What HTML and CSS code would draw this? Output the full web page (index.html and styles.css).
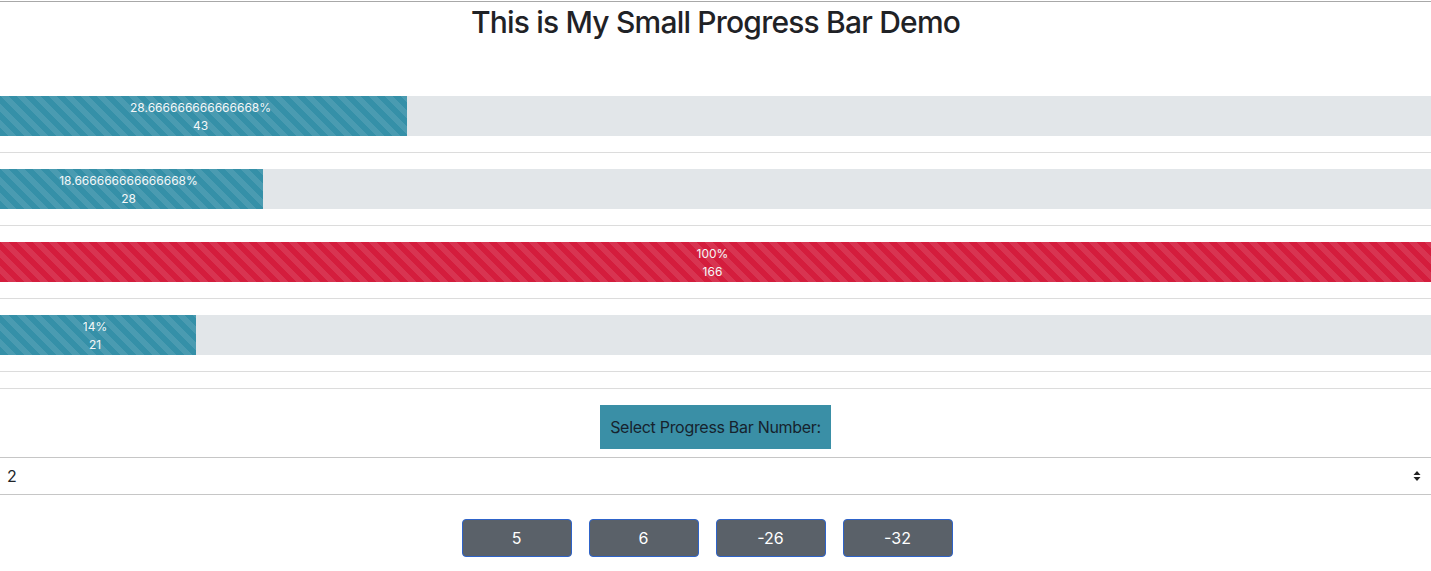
FILE: index.html
```html
<!DOCTYPE html>
<html lang="en">
<head>
<meta charset="utf-8">
<title>Progress Bar Demo</title>
<link rel="stylesheet" href="styles.css">
</head>
<body>
<div class="page">
  <h2 class="title">This is My Small Progress Bar Demo</h2>
  <div class="bars">
    <div class="progress"><div class="bar bar-info" style="width:28.45%"><span>28.666666666666668%</span><span>43</span></div></div>
    <hr class="sep">
    <div class="progress"><div class="bar bar-info" style="width:18.38%"><span>18.666666666666668%</span><span>28</span></div></div>
    <hr class="sep">
    <div class="progress"><div class="bar bar-danger" style="width:100%"><span>100%</span><span>166</span></div></div>
    <hr class="sep">
    <div class="progress"><div class="bar bar-info" style="width:13.7%"><span>14%</span><span>21</span></div></div>
    <hr class="sep">
    <hr class="sep">
  </div>
  <div class="label-row"><label class="select-label" for="sel">Select Progress Bar Number:</label></div>
  <select id="sel" class="select">
    <option>1</option>
    <option selected>2</option>
    <option>3</option>
    <option>4</option>
  </select>
  <div class="buttons">
    <button class="btn">5</button>
    <button class="btn">6</button>
    <button class="btn">-26</button>
    <button class="btn">-32</button>
  </div>
</div>
</body>
</html>
```

FILE: styles.css
```css
html, body {
  margin: 0;
  padding: 0;
  background: #ffffff;
}
body {
  font-family: Inter, "Noto Sans", "Liberation Sans", sans-serif;
  color: #212529;
}
.page {
  margin-top: 1px;
  border-top: 1px solid #a8a8a8;
}
.title {
  margin: 0;
  font-size: 30px;
  line-height: 40px;
  font-weight: 500;
  letter-spacing: -0.8px;
  text-align: center;
  color: #1f2226;
}
.bars {
  margin-top: 54px;
}
.progress {
  height: 40px;
  background: #e2e6e9;
  display: flex;
}
.bar {
  height: 100%;
  box-sizing: border-box;
  padding-top: 2px;
  padding-right: 6px;
  display: flex;
  flex-direction: column;
  justify-content: center;
  align-items: center;
  color: #f4f7f8;
  font-size: 12px;
  line-height: 18px;
  background-size: 16px 16px;
  white-space: nowrap;
}
.bar-info {
  background-color: #3590a8;
  background-image: linear-gradient(45deg, rgba(255,255,255,.1) 25%, transparent 25%, transparent 50%, rgba(255,255,255,.1) 50%, rgba(255,255,255,.1) 75%, transparent 75%, transparent);
}
.bar-danger {
  background-color: #d41d3d;
  background-image: linear-gradient(45deg, rgba(255,255,255,.1) 25%, transparent 25%, transparent 50%, rgba(255,255,255,.1) 50%, rgba(255,255,255,.1) 75%, transparent 75%, transparent);
}
.sep {
  margin: 16px 0;
  border: 0;
  border-top: 1px solid #dcdcdc;
  height: 0;
}
.label-row {
  text-align: center;
  margin-top: 16px;
  margin-bottom: 8px;
}
.select-label {
  display: inline-block;
  padding: 10px 10px;
  line-height: 24px;
  font-size: 16px;
  letter-spacing: -0.3px;
  background: #3a8fa6;
  color: #16232e;
}
.select {
  display: block;
  width: 100%;
  height: 38px;
  margin: 0;
  padding: 0 7px;
  font-family: inherit;
  font-size: 16px;
  color: #212529;
  background: #ffffff url("data:image/svg+xml;utf8,<svg xmlns='http://www.w3.org/2000/svg' width='8' height='12' viewBox='0 0 8 12'><path d='M4 1 L7.5 5 L0.5 5 Z M4 11 L0.5 7 L7.5 7 Z' fill='%23222'/></svg>") no-repeat right 10px center;
  border: 1px solid #c6c6c6;
  border-left: 0;
  border-right: 0;
  border-radius: 0;
  -webkit-appearance: none;
  appearance: none;
}
.buttons {
  display: flex;
  justify-content: center;
  gap: 17px;
  padding-right: 17px;
  margin-top: 24px;
}
.btn {
  width: 110px;
  height: 38px;
  background: #5a6169;
  color: #ffffff;
  border: 1px solid #2e63c9;
  border-radius: 4px;
  font-family: inherit;
  font-size: 16px;
  padding: 0;
}
```
